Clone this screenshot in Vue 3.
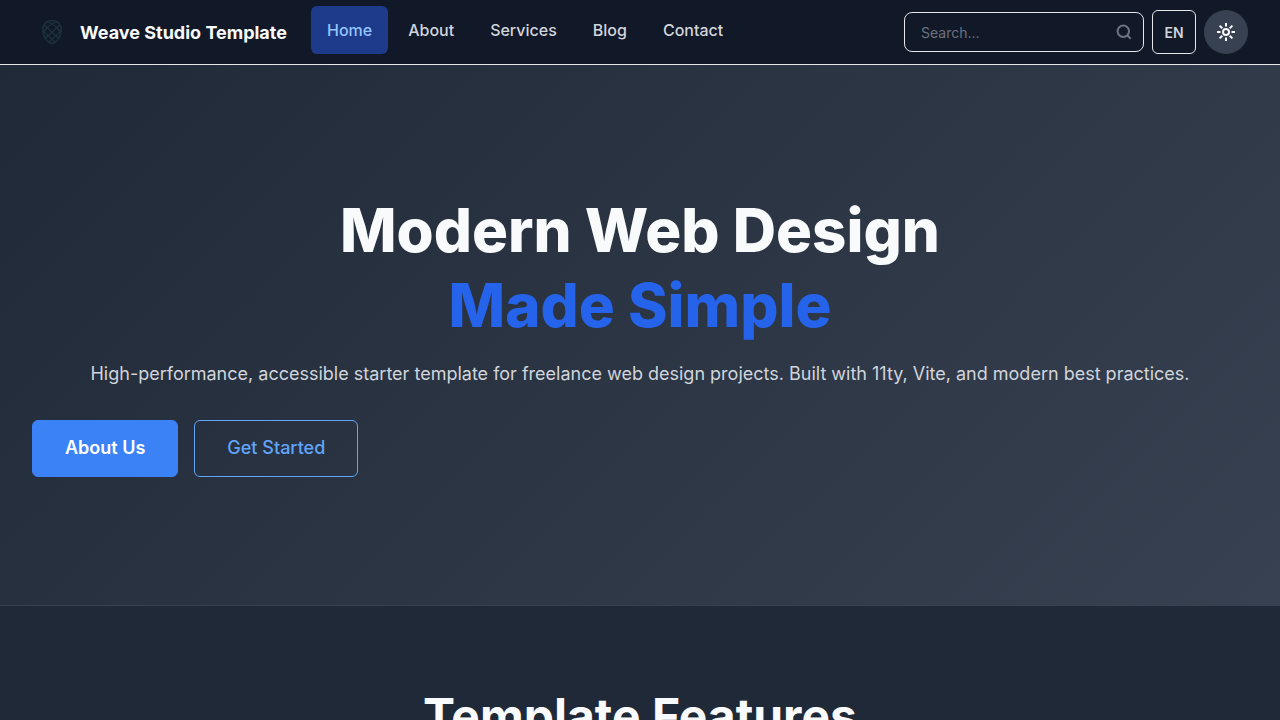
<script setup>
import { ref } from 'vue'

const links = ['Home', 'About', 'Services', 'Blog', 'Contact']
const active = ref('Home')
const query = ref('')
</script>

<template>
  <div class="page">
    <header class="header">
      <a class="brand" href="#home">
        <svg class="logo" viewBox="0 0 40 40" fill="none" stroke="#1d333d" stroke-width="1.300" aria-hidden="true">
          <path d="M20 8.500C25.500 8.500 29.300 12 29.300 17.500C29.300 24.500 24 31.500 20 31.500C16 31.500 10.700 24.500 10.700 17.500C10.700 12 14.500 8.500 20 8.500Z" />
          <path d="M15 9.500Q24 13 28.800 20.500M12 13L27.500 27M11 19L23.500 30.500M25 9.500Q16 13 11.200 20.500M28 13L12.500 27M29 19L16.500 30.500" />
        </svg>
        <span>Weave Studio Template</span>
      </a>
      <nav class="nav" aria-label="Main">
        <a
          v-for="link in links"
          :key="link"
          :href="'#' + link.toLowerCase()"
          :class="{ active: link === active }"
          @click="active = link"
        >{{ link }}</a>
      </nav>
      <div class="tools">
        <form class="search" role="search" @submit.prevent>
          <input v-model="query" type="text" placeholder="Search..." aria-label="Search" />
          <button type="submit" aria-label="Submit search">
            <svg width="16" height="16" viewBox="0 0 16 16" fill="none" stroke="currentColor" stroke-width="2" aria-hidden="true">
              <circle cx="7.300" cy="7.300" r="5.700" />
              <path d="M11.500 11.500L14.700 14.700" />
            </svg>
          </button>
        </form>
        <button class="lang" type="button">EN</button>
        <button class="theme" type="button" aria-label="Toggle theme">
          <svg width="20" height="20" viewBox="0 0 20 20" fill="none" stroke="currentColor" stroke-width="2" aria-hidden="true">
            <circle cx="10" cy="10" r="3" />
            <path d="M10 1V4.500M10 15.500V19M1 10H4.500M15.500 10H19M3.600 3.600L6.300 6.300M13.700 13.700L16.400 16.400M3.600 16.400L6.300 13.700M13.700 6.300L16.400 3.600" />
          </svg>
        </button>
      </div>
    </header>
    <main>
      <section class="hero">
        <h1>Modern Web Design <span>Made Simple</span></h1>
        <p>High-performance, accessible starter template for freelance web design projects. Built with 11ty, Vite, and modern best practices.</p>
        <div class="actions">
          <a class="btn primary" href="#about">About Us</a>
          <a class="btn outline" href="#contact">Get Started</a>
        </div>
      </section>
      <section class="features">
        <h2>Template Features</h2>
      </section>
    </main>
  </div>
</template>

<style>
html {
  scrollbar-width: none;
}
body {
  margin: 0;
  background: #1f2937;
}
</style>

<style scoped>
.page {
  font-family: Inter, "Liberation Sans", sans-serif;
  color: #f9fafb;
}
.page * {
  box-sizing: border-box;
}
a {
  text-decoration: none;
}
button,
input {
  font-family: inherit;
  margin: 0;
}
.header {
  display: flex;
  align-items: center;
  height: 65px;
  padding: 0 32px;
  background: #111827;
  border-bottom: 1px solid #e5e7eb;
}
.brand {
  display: flex;
  align-items: center;
  gap: 8px;
  margin-right: 24px;
  color: #f9fafb;
  font-size: 18px;
  font-weight: 700;
  line-height: 29px;
  white-space: nowrap;
}
.logo {
  width: 40px;
  height: 40px;
}
.nav {
  display: flex;
  gap: 4px;
  margin-bottom: 4px;
}
.nav a {
  padding: 12px 16px;
  border-radius: 6px;
  color: #d1d5db;
  font-size: 16px;
  font-weight: 500;
  line-height: 24px;
}
.nav a.active {
  background: #1e3a8a;
  color: #93c5fd;
}
.tools {
  display: flex;
  align-items: center;
  gap: 8px;
  margin-left: auto;
}
.search {
  display: flex;
  align-items: center;
  width: 240px;
  height: 40px;
  padding: 0 11px 0 16px;
  border: 1px solid #e5e7eb;
  border-radius: 8px;
}
.search input {
  flex: 1;
  min-width: 0;
  padding: 0;
  border: 0;
  outline: 0;
  background: transparent;
  color: #f9fafb;
  font-size: 14px;
}
.search input::placeholder {
  color: #6b7280;
}
.search button {
  display: flex;
  padding: 0;
  border: 0;
  background: transparent;
  color: #6b7280;
}
.lang {
  width: 44px;
  height: 44px;
  padding: 0;
  border: 1px solid #e5e7eb;
  border-radius: 6px;
  background: transparent;
  color: #d1d5db;
  font-size: 14px;
  font-weight: 600;
}
.theme {
  display: flex;
  align-items: center;
  justify-content: center;
  width: 44px;
  height: 44px;
  padding: 0;
  border: 0;
  border-radius: 50%;
  background: #374151;
  color: #f9fafb;
}
.hero {
  padding: 128px 32px;
  background: linear-gradient(135deg, #1f2937, #374151);
  text-align: center;
}
.hero h1 {
  margin: 0 0 16px;
  font-size: 60px;
  font-weight: 800;
  line-height: 75px;
}
.hero h1 span {
  display: block;
  color: #2563eb;
}
.hero p {
  margin: 0 0 32px;
  color: #d1d5db;
  font-size: 18px;
  line-height: 29px;
}
.actions {
  display: flex;
  gap: 16px;
}
.btn {
  padding: 13px 32px 14px;
  border: 1px solid #3b82f6;
  border-radius: 6px;
  font-size: 18px;
  font-weight: 500;
  line-height: 28px;
}
.primary {
  background: #3b82f6;
  color: #fff;
  font-weight: 600;
}
.outline {
  border-color: #60a5fa;
  color: #60a5fa;
}
.features {
  padding: 80px 32px;
  border-top: 1px solid #374151;
  background: #1f2937;
  text-align: center;
}
.features h2 {
  margin: 0;
  font-size: 48px;
  font-weight: 700;
  line-height: 60px;
}
</style>
